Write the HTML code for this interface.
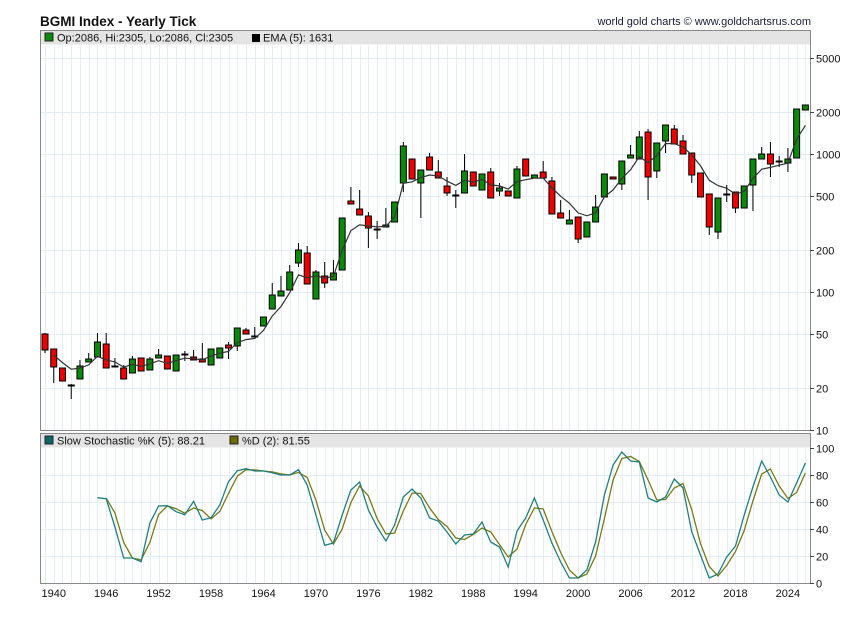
<!DOCTYPE html>
<html><head><meta charset="utf-8">
<style>
html,body{margin:0;padding:0;background:#fff;width:850px;height:619px;overflow:hidden}
svg{display:block}
text{font-family:"Liberation Sans",Arial,sans-serif}
</style></head>
<body>
<svg id="s" width="850" height="619" xmlns="http://www.w3.org/2000/svg">
<rect width="850" height="619" fill="#fff"/>
<text x="40" y="26" font-size="13.5" font-weight="bold" fill="#111">BGMI Index - Yearly Tick</text>
<text x="811" y="25" font-size="11" fill="#1a1a3a" text-anchor="end">world gold charts © www.goldchartsrus.com</text>
<g id="grid"></g>
<rect x="40.5" y="30.5" width="770" height="14" fill="#e4e4e4"/>
<rect x="40.5" y="433.5" width="770" height="14" fill="#e4e4e4"/>
<g id="plot"></g>
<rect x="40.5" y="30.5" width="770" height="400" fill="none" stroke="#888"/>
<rect x="40.5" y="433.5" width="770" height="150" fill="none" stroke="#888"/>
<rect x="45" y="33" width="8" height="8" fill="#0a8a0a" stroke="#222" stroke-width="1"/>
<text x="57" y="41.5" font-size="11" fill="#111">Op:2086, Hi:2305, Lo:2086, Cl:2305</text>
<rect x="252" y="34" width="8" height="8" fill="#000"/>
<text x="263" y="41.5" font-size="11" fill="#111">EMA (5): 1631</text>
<rect x="45" y="436" width="8" height="8" fill="#0a6a6a" stroke="#222" stroke-width="1"/>
<text x="57" y="444.5" font-size="11" fill="#111">Slow Stochastic %K (5): 88.21</text>
<rect x="230" y="436" width="8" height="8" fill="#6a6a00" stroke="#222" stroke-width="1"/>
<text x="242" y="444.5" font-size="11" fill="#111">%D (2): 81.55</text>
<g id="axes"></g>
</svg>
<script>
var NS="http://www.w3.org/2000/svg";
function el(p,t,a,txt){var e=document.createElementNS(NS,t);for(var k in a)e.setAttribute(k,a[k]);if(txt!=null)e.textContent=txt;document.getElementById(p).appendChild(e);return e;}
function X(yr){return 45+(yr-1939)*8.74;}
function Yv(v){return 292-138*Math.log10(v/100);}
function Vy(y){return 100*Math.pow(10,(292-y)/138);}
for(var yr=1939;yr<=2026;yr++){var x=Math.round(X(yr))+0.5;
 el("grid","line",{x1:x,y1:45,x2:x,y2:430,stroke:"#e3eef7","stroke-width":1});
 el("grid","line",{x1:x,y1:448,x2:x,y2:583,stroke:"#e3eef7","stroke-width":1});}
var lv=[5000,2000,1000,500,200,100,50,20,10];
lv.forEach(function(v){var y=Math.round(Yv(v))+0.5;
 if(v!=10)el("grid","line",{x1:41,y1:y,x2:810,y2:y,stroke:"#e3eef7"});
 el("axes","line",{x1:810,y1:y,x2:814,y2:y,stroke:"#444"});
 el("axes","text",{x:816,y:y+4,"font-size":11,fill:"#111"},v);});
for(var s=0;s<=100;s+=20){var y=Math.round(583-1.355*s)+0.5;
 if(s>0&&s<100)el("grid","line",{x1:41,y1:y,x2:810,y2:y,stroke:"#e3eef7"});
 el("axes","line",{x1:810,y1:y,x2:814,y2:y,stroke:"#444"});
 el("axes","text",{x:816,y:y+4,"font-size":11,fill:"#111"},s);}
for(var yr=1940;yr<=2024;yr+=6){el("axes","text",{x:X(yr),y:597,"font-size":11,fill:"#111","text-anchor":"middle"},yr);}
var C=[
["r",334,350,333,353],["r",349,367,349,383],["r",368,381,368,381],["d",385,385,384,399],["g",366,379,360,379],
["g",359,362,353,362],["g",342,357,333,357],["r",344,368,333,368],["d",366,366,358,367],["r",368,379,365,379],
["g",359,373,356,373],["r",358,371,358,371],["g",359,370,357,370],["g",355,358,349,358],["r",356,369,356,369],
["g",355,371,355,371],["d",354,354,351,361],["r",357,360,350,360],["r",359,362,343,362],["g",349,365,349,365],
["g",348,358,348,358],["r",345,348,342,359],["g",328,346,328,351],["r",330,334,328,334],["d",336,336,327,337],
["g",317,326,317,326],["g",295,309,283,309],["g",291,296,276,296],["g",272,290,265,290],["g",250,263,243,267],
["r",253,284,246,284],["g",272,299,270,299],["r",276,283,262,288],["g",273,280,260,280],["g",218,270,218,270],
["r",201,204,187,204],["r",209,215,190,215],["r",216,228,212,248],["d",229,229,221,239],["g",225,227,208,227],
["g",202,222,202,222],["g",146,183,142,192],["r",159,179,159,179],["g",170,183,170,218],["r",157,170,153,170],
["r",172,178,160,178],["r",186,193,177,196],["d",195,195,190,208],["g",171,193,154,193],["r",172,186,172,186],
["g",174,190,174,190],["r",172,198,168,198],["g",188,191,183,196],["r",191,196,191,196],["g",169,198,166,198],
["r",159,176,159,176],["g",175,178,175,178],["r",172,178,161,178],["r",181,214,177,214],["r",213,218,200,218],
["g",220,224,210,224],["r",217,239,217,243],["g",222,237,222,237],["g",207,222,195,222],["g",174,197,174,197],
["r",177,178,177,178],["g",161,184,161,190],["g",155,158,145,158],["g",137,159,131,159],["r",132,177,129,200],
["g",143,171,143,178],["g",125,141,125,153],["r",129,144,125,144],["r",141,154,135,154],["r",153,175,153,183],
["r",173,197,173,197],["r",194,227,194,235],["g",198,232,198,239],["d",194,194,185,202],["r",192,208,192,213],
["g",186,208,186,208],["g",159,185,159,211],["g",154,159,147,159],["r",154,164,142,177],["d",161,161,156,167],
["g",159,163,148,172],["g",109,158,109,158],["g",105,110,105,110]];
var ema=null,pts=[];
C.forEach(function(c,i){var x=X(1939+i),t=c[1],b=c[2];
 el("plot","line",{x1:x,y1:c[3],x2:x,y2:c[4],stroke:"#000","stroke-width":1});
 if(c[0]=="d"){el("plot","line",{x1:x-3.5,y1:t+0.5,x2:x+3.5,y2:t+0.5,stroke:"#000","stroke-width":2});}
 else{el("plot","rect",{x:x-3,y:t,width:6,height:Math.max(b-t,2),fill:c[0]=="g"?"#0a8a0a":"#f00000",stroke:"#000","stroke-width":1});}
 var cl=Vy(c[0]=="r"?b:t);
 ema=ema==null?cl:ema+(cl-ema)/3;
 pts.push(x.toFixed(1)+","+Yv(ema).toFixed(1));});
el("plot","polyline",{points:pts.slice(1).join(" "),fill:"none",stroke:"#333","stroke-width":1.2});
var K=[497.7,498.7,527,558,558,561.7,523,506,505.7,511.7,514.7,501.3,520,517.7,505,481.7,470.7,468.7,471,471,472.7,475,475,469.7,485,515,545.3,543,
515,490,482,510,527,541,525,497,489,498,518,521,532,544,535,534,522,542,547,567,531,518,498,520,543,562,578,578,570,542,495,465,452,
461,462,498,502,497,479,488,532,555,578,574,557,546,515,487,461,477,495,502,483,463];
var kp=[],dp=[];
K.forEach(function(y,i){var x=X(1945+i);kp.push(x.toFixed(1)+","+y);
 if(i>0)dp.push(x.toFixed(1)+","+((y+K[i-1])/2).toFixed(1));});
el("plot","polyline",{points:dp.join(" "),fill:"none",stroke:"#7a7a10","stroke-width":1.3});
el("plot","polyline",{points:kp.join(" "),fill:"none",stroke:"#1f7f7f","stroke-width":1.3});
</script>
</body></html>
